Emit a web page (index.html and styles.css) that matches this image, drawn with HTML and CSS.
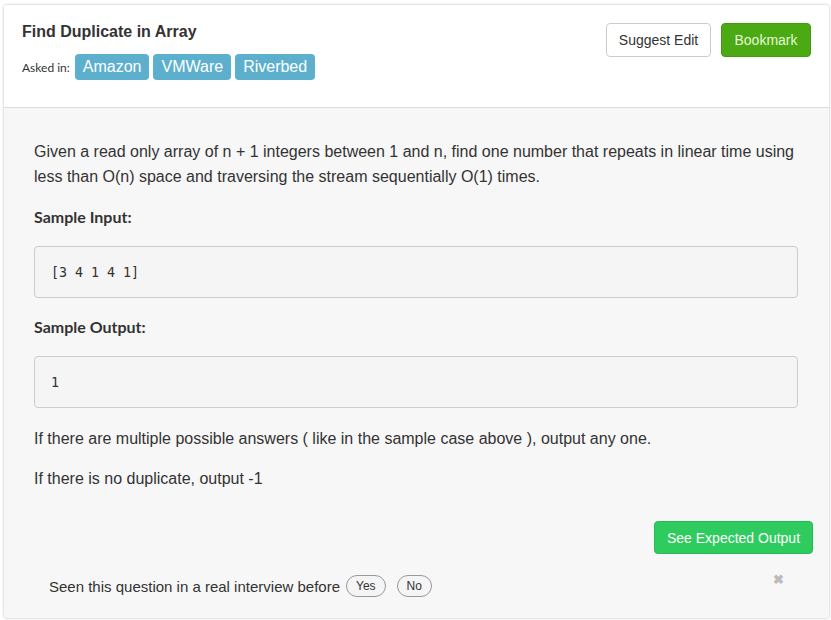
FILE: index.html
```html
<!DOCTYPE html>
<html>
<head>
<meta charset="utf-8">
<link rel="stylesheet" href="styles.css">
</head>
<body>
<div class="card">
  <div class="card-header">
    <div class="title-block">
      <h1 class="title">Find Duplicate in Array</h1>
      <div class="asked">
        <span class="asked-label">Asked in:</span>
        <span class="tag">Amazon</span>
        <span class="tag">VMWare</span>
        <span class="tag">Riverbed</span>
      </div>
    </div>
    <div class="actions">
      <button class="btn btn-default">Suggest Edit</button>
      <button class="btn btn-bookmark">Bookmark</button>
    </div>
  </div>
  <div class="card-body">
    <p class="text">Given a read only array of n + 1 integers between 1 and n, find one number that repeats in linear time using less than O(n) space and traversing the stream sequentially O(1) times.</p>
    <h3 class="label">Sample Input:</h3>
    <pre class="code">[3 4 1 4 1]</pre>
    <h3 class="label">Sample Output:</h3>
    <pre class="code">1</pre>
    <p class="text">If there are multiple possible answers ( like in the sample case above ), output any one.</p>
    <p class="text">If there is no duplicate, output -1</p>
    <div class="expected-row">
      <button class="btn btn-expected">See Expected Output</button>
    </div>
    <div class="feedback">
      <span class="feedback-text">Seen this question in a real interview before</span>
      <button class="pill">Yes</button>
      <button class="pill">No</button>
      <span class="close">&#10006;</span>
    </div>
  </div>
</div>
</body>
</html>
```
FILE: styles.css
```css
html, body {
  margin: 0;
  padding: 0;
  background: #ffffff;
}
body {
  padding: 5px 2px 2px 4px;
  font-family: "Liberation Sans", Arial, sans-serif;
  color: #333;
}
.card {
  width: 825px;
  height: 613px;
  box-sizing: border-box;
  background: #f7f7f7;
  border-radius: 3px;
  box-shadow: 0 0 3px rgba(0,0,0,0.28);
  overflow: hidden;
  display: flex;
  flex-direction: column;
}
.card-header {
  background: #fff;
  border-bottom: 1px solid #dcdcdc;
  height: 103px;
  box-sizing: border-box;
  display: flex;
  justify-content: space-between;
  padding: 17px 18px 0 18px;
}
.title {
  margin: 0;
  font-size: 16px;
  line-height: 20px;
  font-weight: bold;
  color: #333;
}
.asked {
  margin-top: 12px;
  display: flex;
  align-items: center;
  gap: 4px;
}
.asked-label {
  font-family: Lato, "Open Sans", sans-serif;
  font-size: 12px;
  color: #333;
  margin-right: 1px;
}
.tag {
  display: inline-block;
  background: #5db0cd;
  color: #fff;
  font-size: 16px;
  line-height: 26px;
  height: 26px;
  padding: 0 8px;
  border-radius: 4px;
}
.actions {
  display: flex;
  gap: 10px;
  padding-top: 1px;
}
.btn {
  font-family: "Liberation Sans", Arial, sans-serif;
  font-size: 14px;
  border-radius: 4px;
  cursor: pointer;
  box-sizing: border-box;
}
.btn-default {
  background: #fff;
  border: 1px solid #ccc;
  color: #333;
  width: 105px;
  height: 34px;
}
.btn-bookmark {
  background: #4baa13;
  border: 1px solid #429c0e;
  color: #e6f7d6;
  width: 90px;
  height: 34px;
}
.card-body {
  flex: 1;
  padding: 31px 31px 0 30px;
  display: flex;
  flex-direction: column;
}
.text {
  margin: 0 0 15px 0;
  font-size: 16px;
  line-height: 25px;
  color: #333;
}
.label {
  font-family: Lato, "Open Sans", sans-serif;
  font-weight: 700;
  font-size: 16px;
  line-height: 20px;
  margin: 3px 0 19px 0;
  color: #333;
}
.code {
  margin: 0 0 16px 0;
  background: #f5f5f5;
  border: 1px solid #ccc;
  border-radius: 4px;
  padding: 17px 16px 15px 16px;
  height: 52px;
  box-sizing: border-box;
  font-family: "DejaVu Sans Mono", "Liberation Mono", monospace;
  font-size: 13.3px;
  line-height: 18px;
  color: #333;
}
.code + .text {
  margin-top: 2px;
}
.expected-row {
  display: flex;
  justify-content: flex-end;
  margin-top: 15px;
  margin-right: -15px;
}
.btn-expected {
  background: #2ecb5e;
  border: 1px solid #27bb54;
  color: #fff;
  width: 159px;
  height: 33px;
}
.feedback {
  margin-top: 21px;
  padding-left: 15px;
  display: flex;
  align-items: center;
  position: relative;
}
.feedback-text {
  font-size: 15px;
  color: #333;
  margin-right: 6px;
}
.pill {
  font-family: "Liberation Sans", Arial, sans-serif;
  font-size: 12px;
  color: #333;
  background: #f5f5f5;
  border: 1px solid #999;
  border-radius: 11px;
  height: 22px;
  padding: 0 9px;
  margin-right: 11px;
  box-sizing: border-box;
  cursor: pointer;
}
.close {
  position: absolute;
  right: 14px;
  top: -3px;
  color: #bbb;
  font-size: 13px;
  font-weight: bold;
}
```
